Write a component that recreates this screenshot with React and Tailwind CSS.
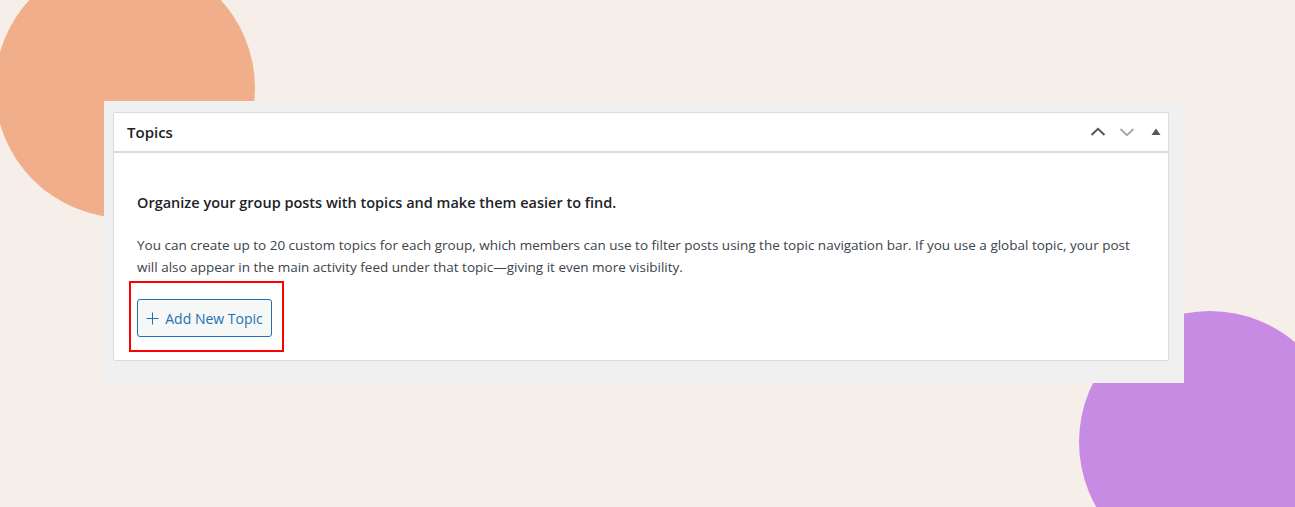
export default function App() {
  return (
    <div className="relative w-[1295px] h-[507px] overflow-hidden bg-[#f6efe9]" style={{ fontFamily: '"Open Sans", "Noto Sans", sans-serif' }}>
      <div className="absolute left-[-5px] top-[-42px] w-[260px] h-[260px] rounded-full bg-[#f0ae8a]" />
      <div className="absolute left-[1079px] top-[311px] w-[262px] h-[262px] rounded-full bg-[#c88be3]" />
      <div className="relative ml-[104px] mt-[101px] w-[1080px] bg-[#f0f0f1] pt-[11px] pb-[22px] pl-[9px] pr-[15px]">
        <div className="bg-white border border-[#dcdcde] rounded-[2px]">
          <div className="h-[40px] flex items-center justify-between border-b-2 border-[#dcdcde] pl-[13px] pr-[4px]">
            <h2 className="text-[15px] font-semibold text-[#1d2327]">Topics</h2>
            <div className="flex items-center gap-[13px]">
              <svg width="16" height="16" viewBox="0 0 16 16"><path d="M1.5 11 L8 4.8 L14.5 11" fill="none" stroke="#50575e" strokeWidth="2" /></svg>
              <svg width="16" height="16" viewBox="0 0 16 16"><path d="M1.5 5 L8 11.2 L14.5 5" fill="none" stroke="#a7aaad" strokeWidth="2" /></svg>
              <svg width="16" height="16" viewBox="0 0 16 16"><path d="M3.5 11 L8 4.5 L12.5 11 Z" fill="#50575e" /></svg>
            </div>
          </div>
          <div className="pl-[23px] pr-[30px] pt-[39px] pb-[8px]">
            <p className="text-[14.5px] font-semibold text-[#1d2327] leading-[22px]">Organize your group posts with topics and make them easier to find.</p>
            <p className="mt-[20px] text-[13.5px] text-[#3c434a] leading-[22px]">You can create up to 20 custom topics for each group, which members can use to filter posts using the topic navigation bar. If you use a global topic, your post will also appear in the main activity feed under that topic—giving it even more visibility.</p>
            <div className="mt-[3px] -ml-[8px] w-[155px] h-[71px] border-2 border-[#ff0000] p-[6px] pt-[16px]">
              <button className="h-[38px] w-[135px] flex items-center justify-center gap-[6px] border border-[#2271b1] rounded-[3px] bg-[#f6f7f7] text-[#2271b1] text-[14px]">
                <svg width="13" height="13" viewBox="0 0 13 13"><path d="M6.5 0.5 V12.5 M0.5 6.5 H12.5" stroke="#2271b1" strokeWidth="1" /></svg>
                Add New Topic
              </button>
            </div>
          </div>
        </div>
      </div>
    </div>
  );
}
